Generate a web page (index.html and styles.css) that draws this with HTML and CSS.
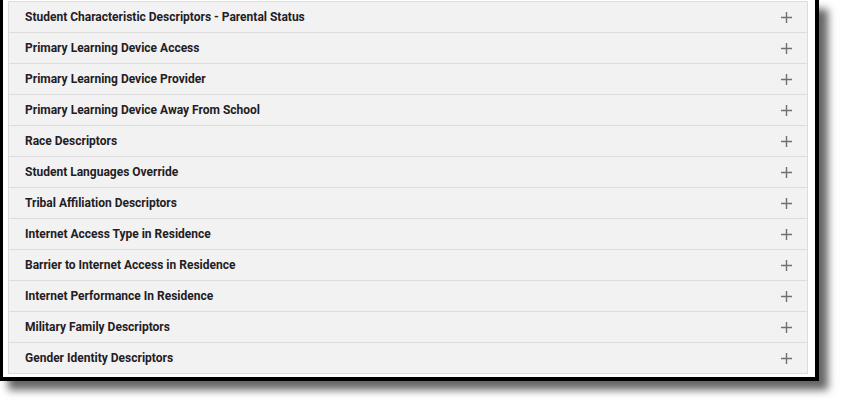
FILE: index.html
```html
<!DOCTYPE html>
<html>
<head>
<meta charset="utf-8">
<link rel="stylesheet" href="styles.css">
</head>
<body>
<div class="frame">
  <div class="list">
    <div class="row"><span class="label">Student Characteristic Descriptors - Parental Status</span><svg class="plus" viewBox="0 0 11 11"><path d="M5.5 0V11M0 5.5H11"/></svg></div>
    <div class="row"><span class="label">Primary Learning Device Access</span><svg class="plus" viewBox="0 0 11 11"><path d="M5.5 0V11M0 5.5H11"/></svg></div>
    <div class="row"><span class="label">Primary Learning Device Provider</span><svg class="plus" viewBox="0 0 11 11"><path d="M5.5 0V11M0 5.5H11"/></svg></div>
    <div class="row"><span class="label">Primary Learning Device Away From School</span><svg class="plus" viewBox="0 0 11 11"><path d="M5.5 0V11M0 5.5H11"/></svg></div>
    <div class="row"><span class="label">Race Descriptors</span><svg class="plus" viewBox="0 0 11 11"><path d="M5.5 0V11M0 5.5H11"/></svg></div>
    <div class="row"><span class="label">Student Languages Override</span><svg class="plus" viewBox="0 0 11 11"><path d="M5.5 0V11M0 5.5H11"/></svg></div>
    <div class="row"><span class="label">Tribal Affiliation Descriptors</span><svg class="plus" viewBox="0 0 11 11"><path d="M5.5 0V11M0 5.5H11"/></svg></div>
    <div class="row"><span class="label">Internet Access Type in Residence</span><svg class="plus" viewBox="0 0 11 11"><path d="M5.5 0V11M0 5.5H11"/></svg></div>
    <div class="row"><span class="label">Barrier to Internet Access in Residence</span><svg class="plus" viewBox="0 0 11 11"><path d="M5.5 0V11M0 5.5H11"/></svg></div>
    <div class="row"><span class="label">Internet Performance In Residence</span><svg class="plus" viewBox="0 0 11 11"><path d="M5.5 0V11M0 5.5H11"/></svg></div>
    <div class="row"><span class="label">Military Family Descriptors</span><svg class="plus" viewBox="0 0 11 11"><path d="M5.5 0V11M0 5.5H11"/></svg></div>
    <div class="row"><span class="label">Gender Identity Descriptors</span><svg class="plus" viewBox="0 0 11 11"><path d="M5.5 0V11M0 5.5H11"/></svg></div>
  </div>
</div>
</body>
</html>
```

FILE: styles.css
```css
html, body {
  margin: 0;
  padding: 0;
  background: #ffffff;
}
body {
  width: 843px;
  height: 405px;
  overflow: hidden;
}
.frame {
  width: 800px;
  margin-left: -1px;
  border: 4px solid #000;
  border-top: 0;
  background: #fff;
  padding: 1px 7px 3px 5px;
  box-sizing: content-box;
  box-shadow: 9px 9px 8px rgba(0, 0, 0, 0.6);
}
.list {
  border-top: 1px solid #dcdcdc;
}
.row {
  display: flex;
  align-items: center;
  justify-content: space-between;
  height: 30px;
  background: #f2f2f2;
  border: 1px solid #dcdcdc;
  border-top: 0;
  padding: 0 15px 0 16px;
}
.label {
  font-family: Roboto, "Liberation Sans", sans-serif;
  font-weight: 700;
  font-size: 12px;
  color: #1f2024;
}
.plus {
  width: 11px;
  height: 11px;
}
.plus path {
  stroke: #6e7075;
  stroke-width: 1.4;
  fill: none;
}
```
